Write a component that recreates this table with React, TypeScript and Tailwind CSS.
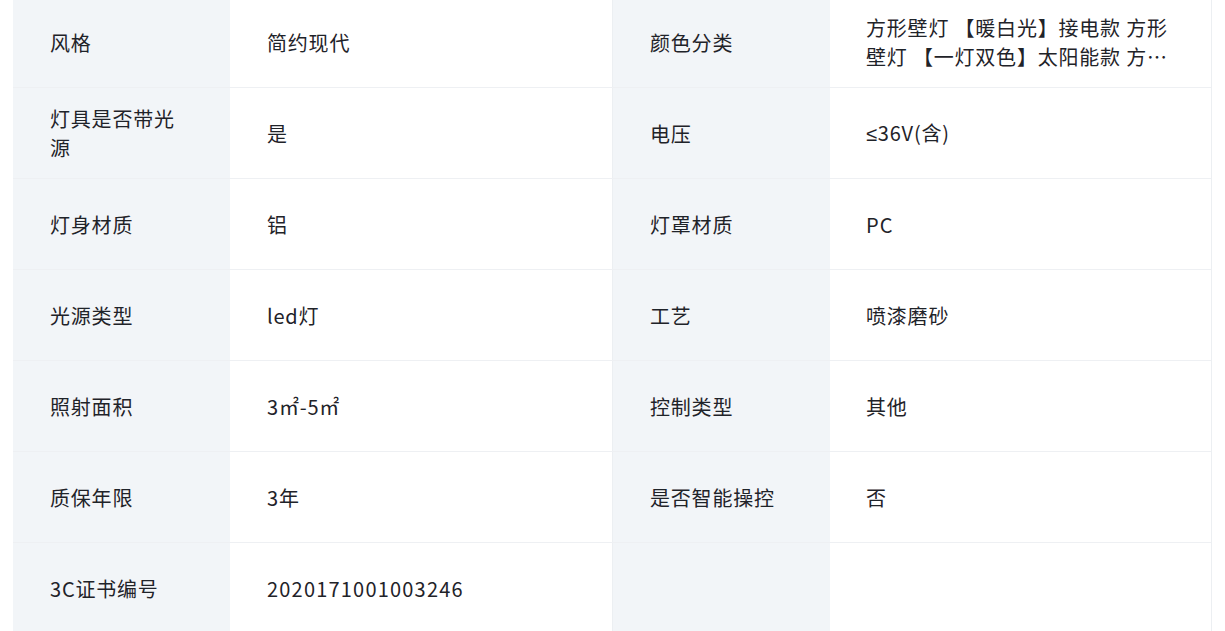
import React from "react";

type Cell = React.ReactNode;

const rows: [Cell, Cell, Cell, Cell][] = [
  ["风格", "简约现代", "颜色分类", "方形壁灯 【暖白光】接电款 方形壁灯 【一灯双色】太阳能款 方形壁灯 【三色光】接电款 圆形壁灯 【暖白光】接电款"],
  ["灯具是否带光源", "是", "电压", <><span style={{ fontFamily: '"Noto Sans", sans-serif' }}>≤</span><span>36V(含)</span></>],
  ["灯身材质", "铝", "灯罩材质", <span className="tracking-[1px]">PC</span>],
  ["光源类型", "led灯", "工艺", "喷漆磨砂"],
  ["照射面积", "3㎡-5㎡", "控制类型", "其他"],
  ["质保年限", "3年", "是否智能操控", "否"],
  ["3C证书编号", <span className="tracking-[1.2px]">2020171001003246</span>, "", ""],
];

export default function App() {
  return (
    <div
      className="w-[1225px] h-[631px] overflow-hidden bg-white"
      style={{ fontFamily: '"Microsoft YaHei", "Noto Sans CJK SC", sans-serif' }}
    >
      <div className="ml-[13px] mt-[-3px] w-[1199px] border-r border-[#eceff2]">
        {rows.map((r, i) => (
          <div
            key={i}
            className="grid grid-cols-[217px_383px_217px_382px] h-[91px] border-b border-[#eef0f3] text-[20px] leading-[29px] tracking-[0.8px] text-[#1f2329]"
          >
            <div className="bg-[#f2f5f8] flex items-center pl-[37px] pr-[50px]">
              <span>{r[0]}</span>
            </div>
            <div className="flex items-center pl-[37px] pr-[30px] border-r border-[#eceff2]">
              <span className="line-clamp-2">{r[1]}</span>
            </div>
            <div className="bg-[#f2f5f8] flex items-center pl-[37px] pr-[50px]">
              <span>{r[2]}</span>
            </div>
            <div className="flex items-center pl-[36px] pr-[38px]">
              <span className="line-clamp-2">{r[3]}</span>
            </div>
          </div>
        ))}
      </div>
    </div>
  );
}
